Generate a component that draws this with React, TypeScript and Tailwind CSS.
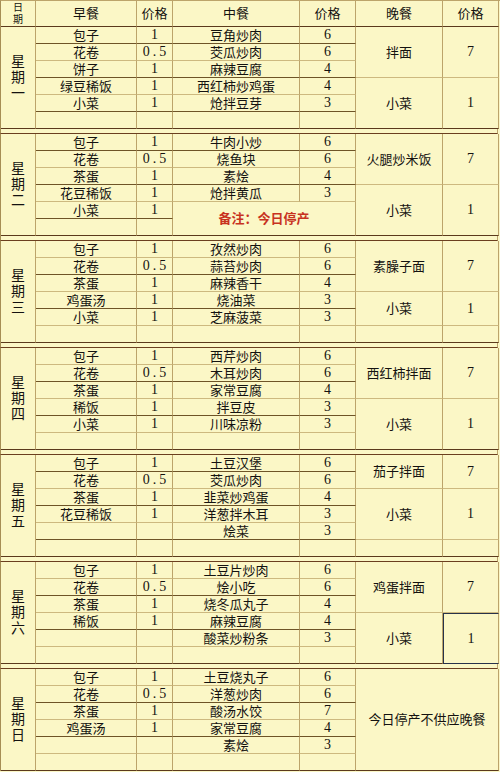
import type { ReactNode } from 'react';

type Row = [string, string, string | null, string | null];

interface Dinner {
  name: string;
  price?: string;
  r: number;
  rs: number;
  wide?: boolean;
  mark?: boolean;
}

interface Day {
  day: string;
  darkOdd: boolean;
  rows: Row[];
  dinner: Dinner[];
  note?: { text: string; r: number; rs: number };
}

const COL = ['', 'col-start-1', 'col-start-2', 'col-start-3', 'col-start-4', 'col-start-5', 'col-start-6', 'col-start-7'];
const ROW = ['', 'row-start-1', 'row-start-2', 'row-start-3', 'row-start-4', 'row-start-5', 'row-start-6'];
const RSPAN = ['', 'row-span-1', 'row-span-2', 'row-span-3', 'row-span-4', 'row-span-5', 'row-span-6'];

const B_END = 'border-b-[#5b3a1c]';
const B_DARK = 'border-b-[#6e5427]';
const B_LIGHT = 'border-b-[#cdb97f]';

const days: Day[] = [
  {
    day: '一',
    darkOdd: true,
    rows: [
      ['包子', '1', '豆角炒肉', '6'],
      ['花卷', '0.5', '茭瓜炒肉', '6'],
      ['饼子', '1', '麻辣豆腐', '4'],
      ['绿豆稀饭', '1', '西红柿炒鸡蛋', '4'],
      ['小菜', '1', '炝拌豆芽', '3'],
      ['', '', '', ''],
    ],
    dinner: [
      { name: '拌面', price: '7', r: 1, rs: 3 },
      { name: '小菜', price: '1', r: 4, rs: 3 },
    ],
  },
  {
    day: '二',
    darkOdd: true,
    rows: [
      ['包子', '1', '牛肉小炒', '6'],
      ['花卷', '0.5', '烧鱼块', '6'],
      ['茶蛋', '1', '素烩', '4'],
      ['花豆稀饭', '1', '炝拌黄瓜', '3'],
      ['小菜', '1', null, null],
      ['', '', null, null],
    ],
    note: { text: '备注：今日停产', r: 5, rs: 2 },
    dinner: [
      { name: '火腿炒米饭', price: '7', r: 1, rs: 3 },
      { name: '小菜', price: '1', r: 4, rs: 3 },
    ],
  },
  {
    day: '三',
    darkOdd: false,
    rows: [
      ['包子', '1', '孜然炒肉', '6'],
      ['花卷', '0.5', '蒜苔炒肉', '6'],
      ['茶蛋', '1', '麻辣香干', '4'],
      ['鸡蛋汤', '1', '烧油菜', '3'],
      ['小菜', '1', '芝麻菠菜', '3'],
      ['', '', '', ''],
    ],
    dinner: [
      { name: '素臊子面', price: '7', r: 1, rs: 3 },
      { name: '小菜', price: '1', r: 4, rs: 2 },
      { name: '', price: '', r: 6, rs: 1 },
    ],
  },
  {
    day: '四',
    darkOdd: false,
    rows: [
      ['包子', '1', '西芹炒肉', '6'],
      ['花卷', '0.5', '木耳炒肉', '6'],
      ['茶蛋', '1', '家常豆腐', '4'],
      ['稀饭', '1', '拌豆皮', '3'],
      ['小菜', '1', '川味凉粉', '3'],
      ['', '', '', ''],
    ],
    dinner: [
      { name: '西红柿拌面', price: '7', r: 1, rs: 3 },
      { name: '小菜', price: '1', r: 4, rs: 3 },
    ],
  },
  {
    day: '五',
    darkOdd: true,
    rows: [
      ['包子', '1', '土豆汉堡', '6'],
      ['花卷', '0.5', '茭瓜炒肉', '6'],
      ['茶蛋', '1', '韭菜炒鸡蛋', '4'],
      ['花豆稀饭', '1', '洋葱拌木耳', '3'],
      ['', '', '烩菜', '3'],
      ['', '', '', ''],
    ],
    dinner: [
      { name: '茄子拌面', price: '7', r: 1, rs: 2 },
      { name: '小菜', price: '1', r: 3, rs: 3 },
      { name: '', price: '', r: 6, rs: 1 },
    ],
  },
  {
    day: '六',
    darkOdd: false,
    rows: [
      ['包子', '1', '土豆片炒肉', '6'],
      ['花卷', '0.5', '烩小吃', '6'],
      ['茶蛋', '1', '烧冬瓜丸子', '4'],
      ['稀饭', '1', '麻辣豆腐', '4'],
      ['', '', '酸菜炒粉条', '3'],
      ['', '', '', ''],
    ],
    dinner: [
      { name: '鸡蛋拌面', price: '7', r: 1, rs: 3 },
      { name: '小菜', price: '1', r: 4, rs: 3, mark: true },
    ],
  },
  {
    day: '日',
    darkOdd: false,
    rows: [
      ['包子', '1', '土豆烧丸子', '6'],
      ['花卷', '0.5', '洋葱炒肉', '6'],
      ['茶蛋', '1', '酸汤水饺', '7'],
      ['鸡蛋汤', '1', '家常豆腐', '4'],
      ['', '', '素烩', '3'],
      ['', '', '', ''],
    ],
    dinner: [{ name: '今日停产不供应晚餐', r: 1, rs: 6, wide: true }],
  },
];

function Cell({ place, bottom, children, className = '' }: { place: string; bottom: string; children?: ReactNode; className?: string }) {
  return (
    <div className={`${place} flex items-center justify-center border-r border-b border-r-[#bca46a] ${bottom} ${className}`}>
      {children}
    </div>
  );
}

// 价格数字用衬线体，稍大一点
function Num({ v }: { v: string }) {
  return <span className={v === '0.5' ? 'text-[14px] tracking-[3px] pl-[3px]' : 'text-[14px]'}>{v}</span>;
}

function DaySection({ d }: { d: Day }) {
  const lineFor = (r: number) => {
    if (r === 6) return B_END;
    const odd = r % 2 === 1;
    return odd === d.darkOdd ? B_DARK : B_LIGHT;
  };

  return (
    <div className="grid grid-cols-[35px_101px_36px_127px_56px_87px_56px] grid-rows-[repeat(6,17px)] border-l border-l-[#a68e55]">
      <Cell place="col-start-1 row-start-1 row-span-6" bottom={B_END}>
        <div className="flex flex-col items-center text-[14px] leading-[16px]">
          <span>星</span>
          <span>期</span>
          <span>{d.day}</span>
        </div>
      </Cell>

      {d.rows.map((row, i) => {
        const r = i + 1;
        const line = lineFor(r);
        return [
          <Cell key={`b${r}`} place={`${COL[2]} ${ROW[r]}`} bottom={line}>{row[0]}</Cell>,
          <Cell key={`bp${r}`} place={`${COL[3]} ${ROW[r]}`} bottom={line}><Num v={row[1]} /></Cell>,
          row[2] !== null && <Cell key={`l${r}`} place={`${COL[4]} ${ROW[r]}`} bottom={line}>{row[2]}</Cell>,
          row[3] !== null && <Cell key={`lp${r}`} place={`${COL[5]} ${ROW[r]}`} bottom={line}><Num v={row[3]} /></Cell>,
        ];
      })}

      {d.note && (
        <Cell place={`col-start-4 col-span-2 ${ROW[d.note.r]} ${RSPAN[d.note.rs]}`} bottom={B_END}>
          <span className="font-bold text-[#c8321e]">{d.note.text}</span>
        </Cell>
      )}

      {d.dinner.map((m) => {
        const last = m.r + m.rs - 1 === 6;
        const line = last ? B_END : B_LIGHT;
        if (m.wide) {
          return (
            <Cell key="wide" place={`col-start-6 col-span-2 ${ROW[m.r]} ${RSPAN[m.rs]}`} bottom={line}>
              {m.name}
            </Cell>
          );
        }
        return [
          <Cell key={`d${m.r}`} place={`${COL[6]} ${ROW[m.r]} ${RSPAN[m.rs]}`} bottom={line}>{m.name}</Cell>,
          <Cell
            key={`dp${m.r}`}
            place={`${COL[7]} ${ROW[m.r]} ${RSPAN[m.rs]}`}
            bottom={m.mark ? 'border-b-[#27324a]' : line}
            className={m.mark ? 'border-l border-t border-l-[#27324a] border-t-[#27324a] border-r-[#27324a]' : ''}
          >
            <Num v={m.price ?? ''} />
          </Cell>,
        ];
      })}
    </div>
  );
}

export default function App() {
  const heads = ['早餐', '价格', '中餐', '价格', '晚餐', '价格'];
  return (
    <div className="w-[500px] min-h-[772px] bg-[#fbf7c6] font-['Liberation_Serif','Noto_Sans_CJK_SC',serif] text-[13px] leading-none text-[#141210]">
      <div className="grid h-[27px] grid-cols-[35px_101px_36px_127px_56px_87px_56px] border-l border-t border-l-[#a68e55] border-t-[#bca46a]">
        <div className="flex flex-col items-center justify-center gap-[2px] border-r border-b border-r-[#bca46a] border-b-[#5b3a1c] text-[10px]">
          <span>日</span>
          <span>期</span>
        </div>
        {heads.map((h, i) => (
          <div key={i} className="flex items-center justify-center border-r border-b border-r-[#bca46a] border-b-[#5b3a1c]">
            {h}
          </div>
        ))}
      </div>

      {days.map((d, i) => (
        <div key={d.day}>
          <DaySection d={d} />
          {i < days.length - 1 && (
            <div className="h-[5px] w-[498px] border-l border-r border-b border-l-[#a68e55] border-r-[#bca46a] border-b-[#6b3f1f]" />
          )}
        </div>
      ))}
    </div>
  );
}
